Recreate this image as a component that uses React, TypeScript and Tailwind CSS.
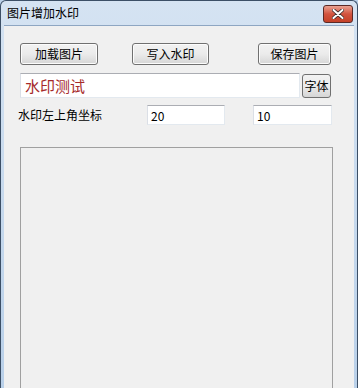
import React, { useState } from 'react';

const font = { fontFamily: '"Noto Sans CJK SC", "Noto Sans", sans-serif' };

const WinButton: React.FC<{ label: string; className?: string }> = ({ label, className }) => (
  <button
    type="button"
    className={`h-[22px] rounded-[3px] border border-[#707070] bg-gradient-to-b from-[#f2f2f2] via-[#ebebeb] to-[#d6d6d6] text-[12px] leading-none text-black shadow-[inset_0_0_0_1px_#fcfcfc] ${className ?? ''}`}
  >
    {label}
  </button>
);

const App: React.FC = () => {
  const [text, setText] = useState('水印测试');
  const [x, setX] = useState('20');
  const [y, setY] = useState('10');

  return (
    <div className="w-[358px] h-[388px] overflow-hidden bg-[#bcd2ea]" style={font}>
      <div className="h-full flex flex-col border-l border-r border-t border-[#3c4f66] rounded-t-[6px] bg-gradient-to-b from-[#d5e3f2] to-[#b9d0e9]">
        {/* title bar */}
        <div className="shrink-0 h-[24px] flex items-center justify-between pl-[6px] pr-[4px]">
          <span className="text-[12px] text-black">图片增加水印</span>
          <div className="self-start mt-[4px] w-[30px] h-[18px] rounded-[3px] border border-[#5a2a26] bg-gradient-to-b from-[#e8a191] via-[#d2533f] to-[#c44127] flex items-center justify-center">
            <svg width="12" height="10" viewBox="0 0 12 10">
              <path d="M1.5 1 L10.5 9 M10.5 1 L1.5 9" stroke="#3b2b2b" strokeWidth="3.6" strokeLinecap="round" />
              <path d="M1.5 1 L10.5 9 M10.5 1 L1.5 9" stroke="#ffffff" strokeWidth="2" strokeLinecap="round" />
            </svg>
          </div>
        </div>

        {/* client area */}
        <div className="flex-1 min-h-0 overflow-hidden mx-[3px] bg-[#f0f0f0] border-t border-[#8ea6c2] pl-[16px] pt-[17px]">
          <div className="flex">
            <WinButton label="加载图片" className="w-[78px]" />
            <WinButton label="写入水印" className="w-[77px] ml-[34px]" />
            <WinButton label="保存图片" className="w-[73px] ml-[49px]" />
          </div>

          <div className="flex mt-[8px]">
            <input
              value={text}
              onChange={e => setText(e.target.value)}
              className="w-[280px] h-[25px] bg-white border border-t-[#abadb3] border-l-[#dbdfe6] border-r-[#e3e9ef] border-b-[#e3e9ef] pl-[4px] text-[15px] text-[#a62a2a] outline-none"
              style={font}
            />
            <button
              type="button"
              className="ml-[2px] mt-[1px] w-[29px] h-[24px] rounded-[3px] border border-[#707070] bg-gradient-to-b from-[#f2f2f2] via-[#ebebeb] to-[#d6d6d6] text-[12px] leading-none text-black"
            >
              字体
            </button>
          </div>

          <div className="flex items-center mt-[7px]">
            <span className="w-[127px] text-[12px] text-black ml-[-2px]">水印左上角坐标</span>
            <input
              value={x}
              onChange={e => setX(e.target.value)}
              className="ml-[2px] w-[78px] h-[20px] bg-white border border-t-[#abadb3] border-l-[#dbdfe6] border-r-[#e3e9ef] border-b-[#e3e9ef] pl-[3px] text-[12px] text-black outline-none"
              style={font}
            />
            <input
              value={y}
              onChange={e => setY(e.target.value)}
              className="ml-[28px] w-[79px] h-[20px] bg-white border border-t-[#abadb3] border-l-[#dbdfe6] border-r-[#e3e9ef] border-b-[#e3e9ef] pl-[3px] text-[12px] text-black outline-none"
              style={font}
            />
          </div>

          <div className="mt-[22px] w-[313px] h-[260px] shrink-0 border border-[#a0a0a0]" />
        </div>
      </div>
    </div>
  );
};

export default App;
